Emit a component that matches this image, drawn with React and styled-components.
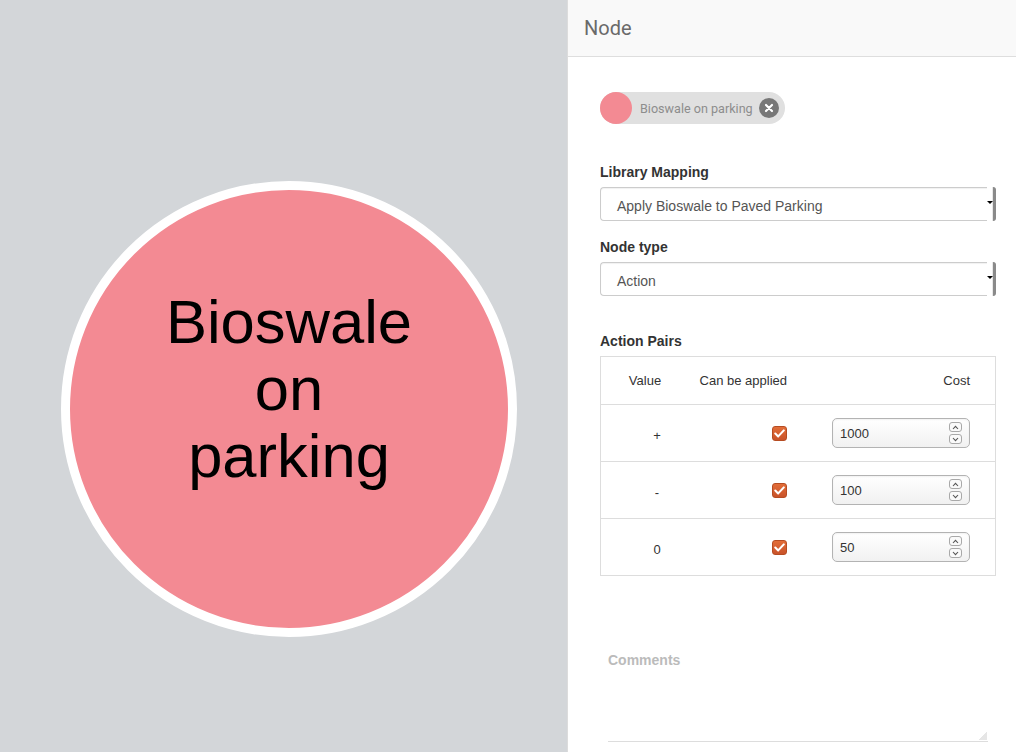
import React from 'react';
import styled, { createGlobalStyle } from 'styled-components';

const GlobalStyle = createGlobalStyle`
  html, body { margin: 0; padding: 0; height: 100%; }
  body {
    font-family: "Liberation Sans", Arial, sans-serif;
    overflow: hidden;
    background: #fff;
  }
  #root { height: 100%; }
  * { box-sizing: border-box; }
`;

const Layout = styled.div`
  display: flex;
  width: 1016px;
  height: 752px;
`;

const Canvas = styled.div`
  position: relative;
  flex: 0 0 567px;
  background: #d3d6d9;
  overflow: hidden;
`;

const NodeCircle = styled.div`
  position: absolute;
  left: ${(p) => p.$x}px;
  top: ${(p) => p.$y}px;
  width: ${(p) => p.$size}px;
  height: ${(p) => p.$size}px;
  border-radius: 50%;
  border: 9px solid #fff;
  background: ${(p) => p.$color};
  display: flex;
  align-items: center;
  justify-content: center;
  padding-bottom: 42px;
`;

const NodeLabel = styled.div`
  font-family: "Liberation Sans", Arial, sans-serif;
  font-size: 61.5px;
  line-height: 67px;
  color: #000;
  text-align: center;
  span { display: block; }
`;

const Panel = styled.aside`
  flex: 1;
  border-left: 1px solid #dcdcdc;
  background: #fff;
  display: flex;
  flex-direction: column;
  min-width: 0;
`;

const PanelHeader = styled.header`
  height: 57px;
  flex: 0 0 57px;
  background: #f9f9f9;
  border-bottom: 1px solid #dedede;
  display: flex;
  align-items: center;
  padding: 0 16px;
  font-family: Roboto, "Liberation Sans", sans-serif;
  font-size: 20px;
  color: #6a6a6a;
`;

const PanelBody = styled.div`
  flex: 1;
  padding: 35px 20px 0 32px;
  display: flex;
  flex-direction: column;
`;

const Chip = styled.div`
  align-self: flex-start;
  display: inline-flex;
  align-items: center;
  height: 32px;
  border-radius: 16px;
  background: #e0e0e0;
  padding-right: 6px;
  margin-bottom: 38px;
`;

const ChipDot = styled.span`
  width: 32px;
  height: 32px;
  border-radius: 50%;
  background: ${(p) => p.$color};
`;

const ChipText = styled.span`
  margin-left: 8px;
  font-family: Roboto, "Liberation Sans", sans-serif;
  font-size: 12.6px;
  color: #8d8d8d;
`;

const ChipClose = styled.span`
  margin-left: 6px;
  width: 20px;
  height: 20px;
  border-radius: 50%;
  background: #777;
  display: flex;
  align-items: center;
  justify-content: center;
`;

const FormGroup = styled.div`
  margin-bottom: ${(p) => p.$gap || 0}px;
`;

const Label = styled.label`
  display: block;
  font-size: 14px;
  font-weight: bold;
  line-height: 20px;
  color: ${(p) => (p.$muted ? '#bbb' : '#333')};
  margin-bottom: 5px;
`;

const Select = styled.div`
  display: flex;
  align-items: flex-start;
  height: 34px;
  border: 1px solid #ccc;
  border-right: none;
  border-radius: 4px;
  box-shadow: inset 0 1px 1px rgba(0, 0, 0, 0.06);
  background: #fff;
`;

const SelectText = styled.div`
  flex: 1;
  height: 26px;
  overflow: hidden;
  padding: 8px 0 0 16px;
  font-size: 14px;
  line-height: 20px;
  color: #555;
`;

const SelectCaret = styled.div`
  align-self: stretch;
  width: 9px;
  display: flex;
  align-items: center;
  padding-bottom: 3px;
  border-right: 3px solid #8a8a8a;
  border-radius: 0 3px 3px 0;
  background: linear-gradient(to right, #fff 0 5px, #e8e8e8 5px);
  margin-top: -1px;
  margin-bottom: -1px;
`;

const Triangle = styled.span`
  width: 0;
  height: 0;
  border-left: 3px solid transparent;
  border-right: 3px solid transparent;
  border-top: 3px solid #000;
`;

const Table = styled.div`
  border: 1px solid #ddd;
`;

const Row = styled.div`
  display: grid;
  grid-template-columns: 88px 98px 1fr;
  align-items: center;
  height: ${(p) => (p.$head ? 48 : 57)}px;
  padding-right: 25px;
  border-bottom: 1px solid #ddd;
  font-size: 13px;
  line-height: 20px;
  color: #333;
  &:last-child { border-bottom: none; height: 56px; }
`;

const Cell = styled.div`
  display: flex;
  justify-content: ${(p) => p.$justify || 'center'};
  padding-left: ${(p) => p.$indent || 0}px;
  padding-top: ${(p) => p.$drop || 0}px;
  white-space: nowrap;
`;

const Checkbox = styled.span`
  width: 15px;
  height: 15px;
  border-radius: 3px;
  background: linear-gradient(to bottom, #e26d38, #c9532a);
  border: 1px solid #b64c22;
  display: flex;
  align-items: center;
  justify-content: center;
`;

const NumberInput = styled.div`
  width: 138px;
  height: 30px;
  border: 1px solid #b3b3b3;
  border-radius: 5px;
  background: linear-gradient(to bottom, #ffffff, #f1f1f1);
  box-shadow: inset 0 1px 2px rgba(0, 0, 0, 0.06);
  display: flex;
  align-items: center;
  justify-content: space-between;
  padding: 0 7px 0 7px;
  font-size: 13px;
  color: #333;
`;

const InputValue = styled.span`
  padding-top: 2px;
`;

const Spinner = styled.div`
  display: flex;
  flex-direction: column;
  gap: 2px;
`;

const SpinButton = styled.span`
  width: 13px;
  height: 10px;
  border: 1px solid #a9a9a9;
  border-radius: 3px;
  background: #fafafa;
  display: flex;
  align-items: center;
  justify-content: center;
`;

const Comments = styled.div`
  margin-top: 74px;
  padding: 0 8px;
`;

const CommentArea = styled.textarea`
  display: block;
  width: 100%;
  height: 67px;
  border: none;
  border-bottom: 1px solid #ddd;
  outline: none;
  resize: none;
  font-family: "Liberation Sans", Arial, sans-serif;
  font-size: 14px;
  background: linear-gradient(135deg, transparent 50%, #e6e6e6 50%) no-repeat right 1px bottom 1px / 8px 8px;
`;

const Chevron = ({ up }) => (
  <svg width="7" height="5" viewBox="0 0 7 5">
    <path
      d={up ? 'M1 4 L3.5 1.3 L6 4' : 'M1 1 L3.5 3.7 L6 1'}
      fill="none"
      stroke="#555"
      strokeWidth="1.1"
    />
  </svg>
);

const pairs = [
  { value: '+', cost: '1000' },
  { value: '-', cost: '100' },
  { value: '0', cost: '50' },
];

const PINK = '#f38a93';

export default function App() {
  return (
    <>
      <GlobalStyle />
      <Layout>
        <Canvas>
          <NodeCircle $x={61} $y={181} $size={456} $color={PINK}>
            <NodeLabel>
              <span>Bioswale</span>
              <span>on</span>
              <span>parking</span>
            </NodeLabel>
          </NodeCircle>
        </Canvas>
        <Panel>
          <PanelHeader>Node</PanelHeader>
          <PanelBody>
            <Chip>
              <ChipDot $color={PINK} />
              <ChipText>Bioswale on parking</ChipText>
              <ChipClose>
                <svg width="10" height="10" viewBox="0 0 10 10">
                  <path d="M2 2 L8 8 M8 2 L2 8" stroke="#fff" strokeWidth="2.2" strokeLinecap="round" />
                </svg>
              </ChipClose>
            </Chip>

            <FormGroup $gap={16}>
              <Label>Library Mapping</Label>
              <Select>
                <SelectText>Apply Bioswale to Paved Parking</SelectText>
                <SelectCaret>
                  <Triangle />
                </SelectCaret>
              </Select>
            </FormGroup>

            <FormGroup $gap={35}>
              <Label>Node type</Label>
              <Select>
                <SelectText>Action</SelectText>
                <SelectCaret>
                  <Triangle />
                </SelectCaret>
              </Select>
            </FormGroup>

            <FormGroup>
              <Label>Action Pairs</Label>
              <Table>
                <Row $head>
                  <Cell $drop={1}>Value</Cell>
                  <Cell $justify="flex-end" $drop={1}>Can be applied</Cell>
                  <Cell $justify="flex-end" $drop={1}>Cost</Cell>
                </Row>
                {pairs.map((p) => (
                  <Row key={p.value}>
                    <Cell $indent={24} $drop={5}>{p.value}</Cell>
                    <Cell $justify="flex-end">
                      <Checkbox>
                        <svg width="11" height="9" viewBox="0 0 11 9">
                          <path d="M1.3 4.6 L4.2 7.4 L9.8 1.4" fill="none" stroke="#fff" strokeWidth="2.1" strokeLinecap="round" strokeLinejoin="round" />
                        </svg>
                      </Checkbox>
                    </Cell>
                    <Cell $justify="flex-end">
                      <NumberInput>
                        <InputValue>{p.cost}</InputValue>
                        <Spinner>
                          <SpinButton><Chevron up /></SpinButton>
                          <SpinButton><Chevron /></SpinButton>
                        </Spinner>
                      </NumberInput>
                    </Cell>
                  </Row>
                ))}
              </Table>
            </FormGroup>

            <Comments>
              <Label $muted>Comments</Label>
              <CommentArea />
            </Comments>
          </PanelBody>
        </Panel>
      </Layout>
    </>
  );
}
